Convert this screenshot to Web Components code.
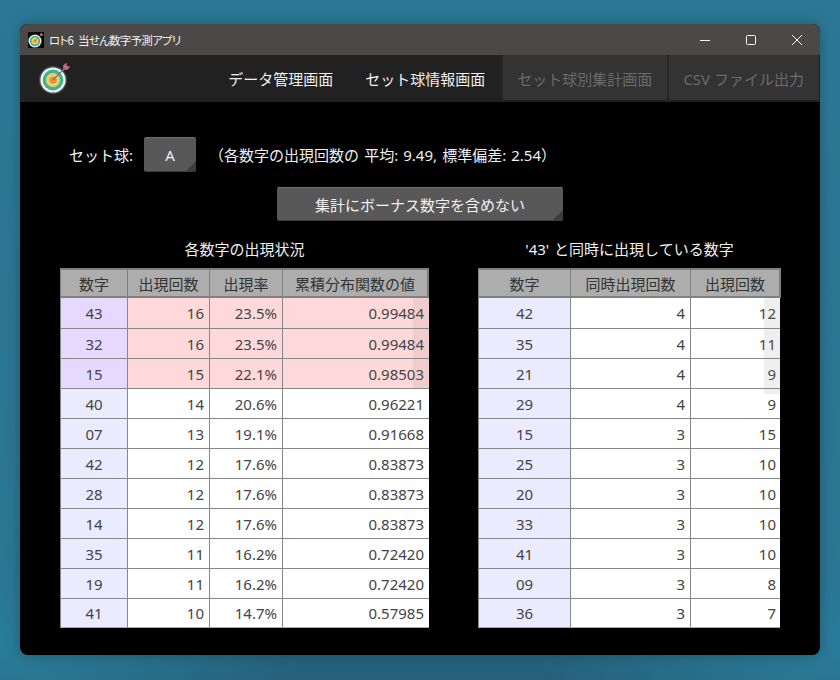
<!DOCTYPE html>
<html lang="ja"><head><meta charset="utf-8"><title>ロト6</title>
<style>
html,body{margin:0;height:100%}
body{width:840px;height:680px;overflow:hidden;box-sizing:border-box;padding:24px 20px 25px;font-family:"Noto Sans","Noto Sans CJK JP",sans-serif;
background:radial-gradient(ellipse 300px 200px at 0 640px,#2a7c9a 0,transparent 100%),radial-gradient(ellipse 300px 200px at 840px 640px,#2a7c9a 0,transparent 100%),linear-gradient(180deg,#2b7896 0,#2a7592 75%,#25607a 100%)}
</style></head><body>
<app-window>
<title-bar slot="title" text="ロト6 当せん数字予測アプリ"></title-bar>
<nav-bar slot="nav">
<nav-tab>データ管理画面</nav-tab>
<nav-tab>セット球情報画面</nav-tab>
<nav-tab disabled>セット球別集計画面</nav-tab>
<nav-tab disabled>CSV ファイル出力</nav-tab>
</nav-bar>
<set-panel>
<corner-button slot="ball" w="52" h="35">A</corner-button>
<corner-button slot="toggle" w="286" h="34">集計にボーナス数字を含めない</corner-button>
<data-table slot="left" caption="各数字の出現状況" cols="67,82,73,147" bar="91" inset="0" heads="数字,出現回数,出現率,累積分布関数の値"
 rows="43,16,23.5%,0.99484;32,16,23.5%,0.99484;15,15,22.1%,0.98503;40,14,20.6%,0.96221;07,13,19.1%,0.91668;42,12,17.6%,0.83873;28,12,17.6%,0.83873;14,12,17.6%,0.83873;35,11,16.2%,0.72420;19,11,16.2%,0.72420;41,10,14.7%,0.57985" hot="3"></data-table>
<data-table slot="right" caption="'43' と同時に出現している数字" cols="92,120,91" bar="96" inset="1" heads="数字,同時出現回数,出現回数"
 rows="42,4,12;35,4,11;21,4,9;29,4,9;15,3,15;25,3,10;20,3,10;33,3,10;41,3,10;09,3,8;36,3,7" hot="0"></data-table>
</set-panel>
</app-window>
<script>
const logo=`<svg viewBox="0 0 32 32" width="100%" height="100%" style="display:block">
<circle cx="14" cy="18" r="14" fill="#4a4a4a"/><circle cx="14" cy="18" r="12.6" fill="#f4f4f4"/><circle cx="14" cy="18" r="10.4" fill="#3fb39a"/><circle cx="14" cy="18" r="7" fill="#e9d35c"/><circle cx="14" cy="18" r="3.6" fill="#ea8a4e"/>
<path d="M14 18 25.5 6.5" stroke="#777" stroke-width="1.2"/><path d="M24.6 7.4 24 3.8 27.2 .8 28 4 31.2 4.8 28.2 8z" fill="#c9697f"/></svg>`;
class Base extends HTMLElement{constructor(){super();this.attachShadow({mode:'open'})}}
customElements.define('app-window',class extends Base{connectedCallback(){this.shadowRoot.innerHTML=`<style>
:host{display:flex;flex-direction:column;width:800px;height:631px;border-radius:8px;overflow:hidden;background:#000;box-shadow:0 0 14px rgba(0,0,0,.25)}
main{flex:1;min-height:0}</style><slot name="title"></slot><slot name="nav"></slot><main><slot></slot></main>`}});
customElements.define('title-bar',class extends Base{connectedCallback(){this.shadowRoot.innerHTML=`<style>
:host{display:flex;align-items:center;height:31px;background:#4b4947;color:#f2f2f2;font:11.5px "Noto Sans CJK JP","Noto Sans",sans-serif;font-feature-settings:"palt";letter-spacing:-.75px;word-spacing:3px}
.ic{width:16px;height:16px;margin-left:8px;margin-right:5px;background:#000;padding:0}
.t{flex:1;white-space:nowrap}
.b{width:46px;height:31px;display:flex;align-items:center;justify-content:center}
</style><div class="ic">${logo}</div><div class="t">${this.getAttribute('text')}</div>
<div class="b"><svg width="12" height="12" viewBox="0 0 12 12"><path d="M1 6.5h10" stroke="#f4f4f4" fill="none"/></svg></div>
<div class="b"><svg width="12" height="12" viewBox="0 0 12 12"><rect x="1.5" y="1.5" width="9" height="9" rx="1" stroke="#f4f4f4" fill="none"/></svg></div>
<div class="b"><svg width="12" height="12" viewBox="0 0 12 12"><path d="M1 1l10 10M11 1 1 11" stroke="#f4f4f4" fill="none"/></svg></div>`}});
customElements.define('nav-bar',class extends Base{connectedCallback(){this.shadowRoot.innerHTML=`<style>
:host{display:flex;align-items:stretch;height:47px;background:#212121;box-sizing:border-box}
.l{width:32px;height:32px;margin:7px auto 0 19px}
.s{display:flex;padding-right:1px}</style><div class="l">${logo}</div><div class="s"><slot></slot></div>`}});
customElements.define('nav-tab',class extends Base{connectedCallback(){const d=this.hasAttribute('disabled');this.shadowRoot.innerHTML=`<style>
:host{display:block}
div{height:45px;padding:2px 16px 0;display:flex;align-items:center;font-size:15px;white-space:nowrap;box-sizing:border-box;color:${d?'#6b6b6b':'#f0f0f0'};background:${d?'#333':'#212121'};${d?'border-radius:2px;margin-left:1px;padding:2px 15px 0 14px;border-left:1px solid #2a2a2a;':''}}
</style><div><slot></slot></div>`}});
customElements.define('corner-button',class extends Base{connectedCallback(){const w=this.getAttribute('w'),h=this.getAttribute('h');this.shadowRoot.innerHTML=`<style>
:host{display:block;flex:none}
div{position:relative;width:${w}px;height:${h}px;box-sizing:border-box;border-radius:2px;background:#585858;border-top:1px solid #6e6e6e;border-bottom:1px solid #3c3c3c;color:#f0f0f0;font-size:15px;display:flex;align-items:center;justify-content:center}
i{position:absolute;right:0;bottom:0;width:0;height:0;border-style:solid;border-width:0 0 10px 10px;border-color:transparent transparent #3d3d3d transparent}
</style><div><slot></slot><i></i></div>`}});
customElements.define('set-panel',class extends Base{connectedCallback(){this.shadowRoot.innerHTML=`<style>
:host{display:block;padding:35px 39px 0 40px;color:#f0f0f0;font-size:15px}
.a{display:flex;align-items:center;height:35px;margin-left:9px}
.a span{white-space:nowrap}
.b{display:flex;justify-content:center;margin:15px 0 15px;padding-right:1px}
.c{display:flex;justify-content:space-between}
</style><div class="a"><span style="margin-right:11px">セット球:</span><slot name="ball"></slot><span style="margin-left:13px;word-spacing:1.2px">（各数字の出現回数の 平均: 9.49, 標準偏差: 2.54）</span></div>
<div class="b"><slot name="toggle"></slot></div><div class="c"><slot name="left"></slot><slot name="right"></slot></div>`}});
customElements.define('data-table',class extends Base{connectedCallback(){
const cols=this.getAttribute('cols').split(',').map(Number),heads=this.getAttribute('heads').split(','),hot=+this.getAttribute('hot');
const inset=+this.getAttribute('inset');
const rows=this.getAttribute('rows').split(';').map(r=>r.split(','));
const total=cols.reduce((a,b)=>a+b,0);
let h=heads.map(x=>`<div class="th">${x}</div>`).join('');
let b=rows.map((r,i)=>r.map((x,j)=>`<div class="td ${j==0?'n':'v'} ${i<hot?'hot':''} ${i==0?'first':''} ${i==rows.length-1?'last':''} ${j==r.length-1?'end':''}">${x}</div>`).join('')).join('');
this.shadowRoot.innerHTML=`<style>
:host{display:block;width:${total}px}
.cap{height:32px;line-height:27px;text-align:center;font-size:15px;white-space:nowrap;color:#f0f0f0;box-sizing:border-box;word-spacing:1px}
.g{position:relative;display:grid;grid-template-columns:${cols.map(c=>c+'px').join(' ')};grid-auto-rows:30px;color:#444;font-size:15px;width:${total}px}
.th{background:#adadad;border:1px solid #808080;border-width:2px 1px 2px 1px;box-sizing:border-box;display:flex;align-items:center;justify-content:center;font-size:15px;color:#333;border-right-width:0}
.th:nth-child(${cols.length}){border-right-width:2px}
.td{box-sizing:border-box;border-top:1px solid #888;border-left:1px solid #888;display:flex;align-items:center;background:#fff}
.first{border-top:0}
.n{justify-content:center;background:#ebebff}
.n.hot{background:#e6d9ff}
.v{justify-content:flex-end;padding-right:5px}
.v.hot{background:#ffd9d9}
.end{margin-right:${inset}px;padding-right:${5-inset}px}
.last{border-bottom:1px solid #aaa}
.bar{position:absolute;right:${inset}px;top:30px;width:16px;height:${this.getAttribute('bar')}px;background:rgba(120,120,120,.12)}
</style><div class="cap">${this.getAttribute('caption')}</div><div class="g">${h}${b}<div class="bar"></div></div>`}});
</script>
</body></html>
